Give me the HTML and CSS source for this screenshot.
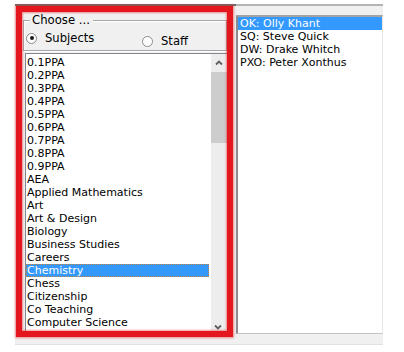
FILE: index.html
```html
<!DOCTYPE html>
<html>
<head>
<meta charset="utf-8">
<link rel="stylesheet" href="styles.css">
</head>
<body>
<div class="window">
  <div class="topline"><div class="tl-left"></div><div class="tl-right"></div></div>
  <div class="panes">
    <div class="left">
      <div class="group">
        <span class="legend">Choose ...</span>
        <div class="radios">
          <div class="radio r1"><span class="circle"><span class="dot"></span></span><span class="label">Subjects</span></div>
          <div class="radio r2"><span class="circle"></span><span class="label">Staff</span></div>
        </div>
      </div>
      <div class="listbox">
        <ul class="items subjects">
          <li>0.1PPA</li>
          <li>0.2PPA</li>
          <li>0.3PPA</li>
          <li>0.4PPA</li>
          <li>0.5PPA</li>
          <li>0.6PPA</li>
          <li>0.7PPA</li>
          <li>0.8PPA</li>
          <li>0.9PPA</li>
          <li>AEA</li>
          <li>Applied Mathematics</li>
          <li>Art</li>
          <li>Art &amp; Design</li>
          <li>Biology</li>
          <li>Business Studies</li>
          <li>Careers</li>
          <li class="sel focus">Chemistry</li>
          <li>Chess</li>
          <li>Citizenship</li>
          <li>Co Teaching</li>
          <li>Computer Science</li>
        </ul>
        <div class="scrollbar">
          <div class="arrow"><svg width="17" height="17" viewBox="0 0 17 17"><polyline points="5,10.5 8,7.5 11,10.5" fill="none" stroke="#606060" stroke-width="1.8"/></svg></div>
          <div class="thumb"></div>
          <div class="track"></div>
          <div class="arrow"><svg width="17" height="17" viewBox="0 0 17 17"><polyline points="4,6.5 7,9.5 10,6.5" fill="none" stroke="#606060" stroke-width="1.8"/></svg></div>
        </div>
      </div>
    </div>
    <div class="right">
      <ul class="items staff">
        <li class="sel">OK: Olly Khant</li>
        <li>SQ: Steve Quick</li>
        <li>DW: Drake Whitch</li>
        <li>PXO: Peter Xonthus</li>
      </ul>
    </div>
  </div>
  <div class="frame"></div>
</div>
</body>
</html>
```
FILE: styles.css
```css
html, body {
  margin: 0;
  padding: 0;
  background: #ffffff;
}
body {
  width: 404px;
  height: 352px;
  overflow: hidden;
  font-family: "DejaVu Sans", Verdana, sans-serif;
  font-size: 11px;
  color: #000;
}
.window {
  position: relative;
  margin: 4px 0 0 15px;
  width: 368px;
  height: 341px;
  background: #f0f0f0;
  border-bottom: 1px solid #e2e2e2;
  box-sizing: border-box;
}
.topline {
  display: flex;
  height: 2px;
}
.tl-left {
  width: 221px;
  background: #6e6e6e;
}
.tl-right {
  flex: 1;
  background: #b4b4b4;
}
.panes {
  display: flex;
  align-items: flex-start;
}
.left {
  width: 221px;
  display: flex;
  flex-direction: column;
}
.group {
  margin: 14px 0 0 8px;
  width: 204px;
  height: 31px;
  box-sizing: border-box;
  border: 1px solid #a6a6a6;
  box-shadow: inset 1px 1px 0 #ffffff, 1px 1px 0 #ffffff;
}
.legend {
  display: block;
  width: max-content;
  margin: -8px 0 0 6px;
  padding: 0 3px 0 2px;
  background: #f0f0f0;
  font-size: 11.7px;
  line-height: 14px;
}
.radios {
  display: flex;
  align-items: flex-start;
  margin-top: 4px;
}
.radio {
  display: flex;
  align-items: center;
  font-size: 11.6px;
  line-height: 14px;
}
.r1 {
  width: 116px;
  margin-left: 2px;
}
.r2 {
  margin-top: 3px;
}
.circle {
  width: 11px;
  height: 11px;
  box-sizing: border-box;
  border: 1px solid #8a8a8a;
  border-radius: 50%;
  background: #ffffff;
  margin-right: 8px;
  display: flex;
  align-items: center;
  justify-content: center;
}
.dot {
  width: 4px;
  height: 4px;
  border-radius: 50%;
  background: #1a1a1a;
}
.listbox {
  display: flex;
  margin: 2px 0 0 10px;
  width: 203px;
  height: 283px;
  box-sizing: border-box;
  border: 1px solid #828790;
  border-right: none;
  border-bottom: none;
  background: #ffffff;
  overflow: hidden;
}
.items {
  list-style: none;
  margin: 0;
  padding: 2px 0 0 0;
  flex: 1;
}
.subjects {
  margin-right: 2px;
}
.items li {
  height: 13px;
  box-sizing: border-box;
  padding: 1px 0 0 1px;
  line-height: 12px;
  white-space: nowrap;
}
.items li.sel {
  background: #3399ff;
  color: #ffffff;
}
.items li.focus {
  outline: 1px dotted #c8823c;
  outline-offset: -1px;
}
.scrollbar {
  width: 17px;
  display: flex;
  flex-direction: column;
  background: #ededed;
}
.arrow {
  height: 17px;
  flex: none;
}
.arrow svg {
  display: block;
}
.thumb {
  height: 71px;
  margin: 1px 1px 0 0;
  background: #cdcdcd;
}
.track {
  flex: 1;
}
.right {
  margin: 9px 0 0 0;
  flex: 1;
  height: 319px;
  box-sizing: border-box;
  background: #ffffff;
  border-top: 2px solid #a3a3a3;
  border-left: 2px solid #8c8c8c;
  border-right: 1px solid #e6e6e6;
  border-bottom: 1px solid #c4c4c4;
}
.staff {
  padding-top: 0;
}
.staff li {
  padding-left: 2px;
}
.frame {
  position: absolute;
  left: 1px;
  top: 2px;
  width: 217px;
  height: 331px;
  box-sizing: border-box;
  border: 6px solid #e3171d;
  box-shadow: 0 0 2px 1px rgba(227, 23, 29, 0.45), inset 0 0 2px 1px rgba(227, 23, 29, 0.45);
  pointer-events: none;
}
```
